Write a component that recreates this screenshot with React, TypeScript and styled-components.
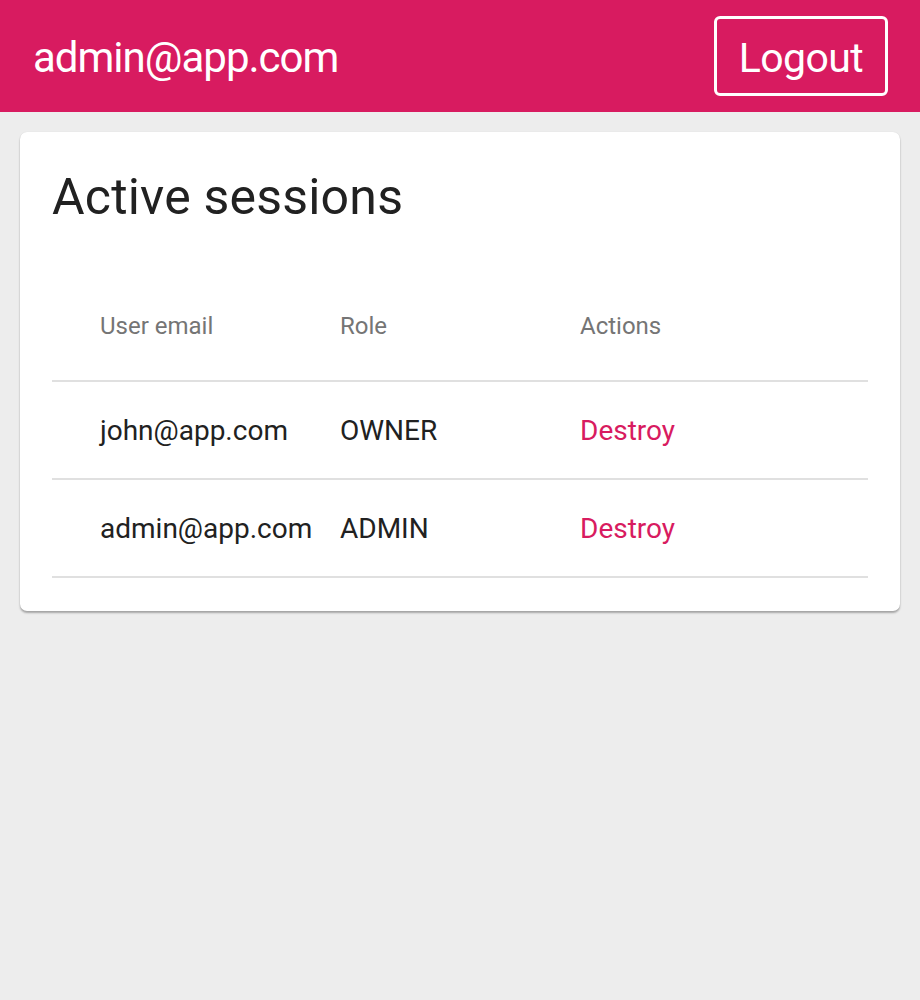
import React from "react";
import styled, { createGlobalStyle } from "styled-components";

// ============================================
// DATA
// ============================================
interface Session {
  email: string;
  role: string;
}

const SESSIONS: Session[] = [
  { email: "john@app.com", role: "OWNER" },
  { email: "admin@app.com", role: "ADMIN" },
];

const CURRENT_USER = "admin@app.com";

// ============================================
// STYLES
// ============================================
const GlobalStyle = createGlobalStyle`
  html, body {
    margin: 0;
    padding: 0;
    background: #ededed;
    font-family: Roboto, "Noto Sans", sans-serif;
  }
`;

const Page = styled.div`
  min-height: 1000px;
  background: #ededed;
`;

const TopBar = styled.header`
  height: 112px;
  box-sizing: border-box;
  background: #d81b60;
  display: flex;
  align-items: center;
  justify-content: space-between;
  padding: 0 32px 0 33px;
  color: #fff;
`;

const UserName = styled.div`
  font-size: 42px;
  letter-spacing: -1px;
  line-height: 1;
  margin-top: 3px;
`;

const LogoutButton = styled.button`
  box-sizing: border-box;
  width: 174px;
  height: 80px;
  background: transparent;
  border: 3px solid #fff;
  border-radius: 6px;
  color: #fff;
  font-family: Roboto, sans-serif;
  font-size: 41px;
  letter-spacing: -0.6px;
  padding: 4px 0 0;
  cursor: pointer;
`;

const Main = styled.main`
  padding: 20px;
`;

const Card = styled.section`
  background: #fff;
  border-radius: 7px;
  box-shadow: 0 2px 2px rgba(0, 0, 0, 0.3), 0 0 1px rgba(0, 0, 0, 0.12);
  padding: 32px 32px 33px;
`;

const Title = styled.h1`
  margin: 0;
  font-size: 50px;
  font-weight: 400;
  line-height: 66px;
  color: #212121;
  letter-spacing: 0.2px;
`;

const Table = styled.div`
  margin-top: 30px;
`;

const Row = styled.div<{ $head?: boolean }>`
  display: grid;
  grid-template-columns: 240px 240px 1fr;
  align-items: center;
  height: ${(p) => (p.$head ? "120px" : "96px")};
  border-bottom: 2px solid #e0e0e0;
`;

const Cell = styled.div<{ $head?: boolean; $action?: boolean }>`
  padding-left: 48px;
  font-size: ${(p) => (p.$head ? "24px" : "28px")};
  color: ${(p) => (p.$action ? "#d81b60" : p.$head ? "#757575" : "#212121")};
  cursor: ${(p) => (p.$action ? "pointer" : "default")};
  white-space: nowrap;
  margin-top: ${(p) => (p.$head ? "12px" : "1px")};
`;

// ============================================
// APP
// ============================================
export default function App() {
  return (
    <Page>
      <GlobalStyle />
      <TopBar>
        <UserName>{CURRENT_USER}</UserName>
        <LogoutButton>Logout</LogoutButton>
      </TopBar>
      <Main>
        <Card>
          <Title>Active sessions</Title>
          <Table>
            <Row $head>
              <Cell $head>User email</Cell>
              <Cell $head>Role</Cell>
              <Cell $head>Actions</Cell>
            </Row>
            {SESSIONS.map((s) => (
              <Row key={s.email}>
                <Cell>{s.email}</Cell>
                <Cell>{s.role}</Cell>
                <Cell $action>Destroy</Cell>
              </Row>
            ))}
          </Table>
        </Card>
      </Main>
    </Page>
  );
}
